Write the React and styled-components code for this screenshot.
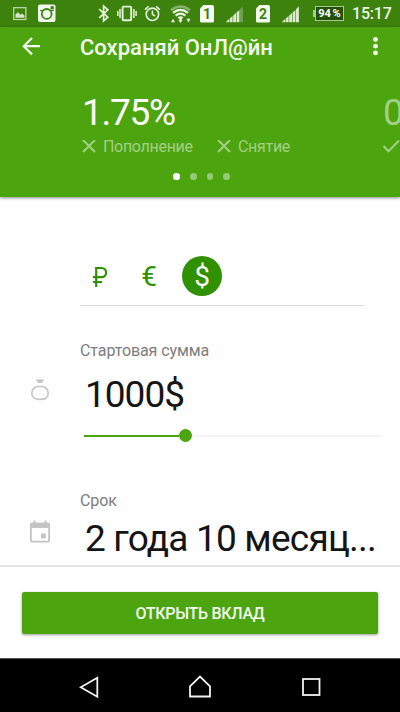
// App.jsx

import React from 'react';
import styled, { createGlobalStyle } from 'styled-components';

// --- Color Definitions ---
const GREEN = '#4ca40f';
const GREEN_STATUS = '#3c820d';
const GREEN_DARK = '#2f9000';
const GREEN_SOFT = '#a2d084';
const WHITE = '#ffffff';
const GREY_LABEL = '#7d7d7d';
const GREY_ICON = '#c4c4c4';
const INK = '#151515';

const GlobalStyle = createGlobalStyle`
  * {
    box-sizing: border-box;
  }

  body {
    margin: 0;
    overflow: hidden;
    font-family: Roboto, 'Liberation Sans', sans-serif;
  }
`;

// --- Styled Components ---

const Screen = styled.div`
  display: flex;
  flex-direction: column;
  width: 400px;
  height: 712px;
  overflow: hidden;
  background-color: #fefefe;
`;

const StatusBar = styled.div`
  display: flex;
  align-items: center;
  flex: none;
  height: 27px;
  background-color: ${GREEN_STATUS};
`;

const StatusIcons = styled.svg`
  flex: none;
  display: block;
  margin-left: ${({ $gap }) => $gap || 0}px;
`;

const SimBadge = styled.span`
  width: 14px;
  height: 18px;
  margin-left: ${({ $gap }) => $gap}px;
  border-radius: 2px;
  clip-path: polygon(4px 0, 100% 0, 100% 100%, 0 100%, 0 4px);
  background-color: #f6fbf2;
  color: ${GREEN_STATUS};
  font-size: 14px;
  font-weight: 700;
  line-height: 19px;
  text-align: center;
`;

const Battery = styled.span`
  position: relative;
  width: 29px;
  height: 15px;
  margin-left: 15px;
  border: 1px solid #a9c894;
  background-color: #24510a;
  color: ${WHITE};
  font-size: 11px;
  font-weight: 700;
  line-height: 14px;
  text-align: center;
  white-space: nowrap;
  word-spacing: -1px;

  &:before {
    content: '';
    position: absolute;
    left: -3px;
    top: 3px;
    width: 2px;
    height: 7px;
    background-color: #a9c894;
  }
`;

const Clock = styled.span`
  margin-left: 8px;
  color: #eef6e8;
  font-size: 16px;
  font-weight: 500;
  line-height: 28px;
  letter-spacing: -0.2px;
`;

const Header = styled.header`
  flex: none;
  height: 170px;
  background-color: ${GREEN};
  box-shadow: 0 1px 3px rgba(0, 0, 0, 0.45);
  overflow: hidden;
`;

const AppBar = styled.div`
  display: flex;
  align-items: center;
  height: 40px;
  padding: 0 20px 0 22px;
`;

const Title = styled.h1`
  flex: 1;
  margin: 0 0 0 38px;
  color: #f4faef;
  font-size: 22px;
  font-weight: 500;
  line-height: 41px;
  white-space: nowrap;
`;

const Offers = styled.div`
  display: flex;
  height: 89px;
  padding: 24px 0 0 82px;
`;

const Offer = styled.div`
  flex: none;
  width: 301px;
  color: ${({ $active }) => ($active ? WHITE : GREEN_SOFT)};
`;

const Rate = styled.div`
  height: 45px;
  font-size: 37px;
  line-height: 44px;
  letter-spacing: -1.3px;
`;

const Features = styled.div`
  display: flex;
  color: ${GREEN_SOFT};
`;

const Feature = styled.div`
  display: flex;
  align-items: center;
  width: 135px;
  min-height: 21px;
  gap: 7px;
  font-size: 16px;
  line-height: 21px;
  letter-spacing: -0.3px;
`;

const Pager = styled.div`
  display: flex;
  justify-content: center;
  gap: 10px;
  padding: 17px 0 0 3px;
`;

const PagerDot = styled.span`
  width: 6.7px;
  height: 6.7px;
  border-radius: 50%;
  background-color: ${({ $active }) => ($active ? WHITE : '#94ca73')};
`;

const Form = styled.main`
  flex: none;
  height: 368px;
  overflow: hidden;
`;

const Currencies = styled.div`
  display: flex;
  align-items: flex-start;
  width: 284px;
  height: 50px;
  margin: 59px 0 35px 80px;
  border-bottom: 1px solid #dedede;
`;

const Currency = styled.button`
  display: flex;
  align-items: center;
  justify-content: center;
  width: 40px;
  height: 40px;
  margin-right: ${({ $gap }) => $gap}px;
  padding: 0;
  border: 0;
  border-radius: 50%;
  background-color: ${({ $active }) => ($active ? GREEN_DARK : 'transparent')};
  color: ${({ $active }) => ($active ? WHITE : GREEN_DARK)};
  font-family: inherit;
  font-size: 28px;
  line-height: 41px;
`;

const Field = styled.section`
  display: grid;
  grid-template-columns: 80px 1fr;
  height: 150px;
`;

const FieldIcon = styled.div`
  display: flex;
  justify-content: center;
  padding-top: ${({ $top }) => $top}px;
`;

const FieldLabel = styled.div`
  color: ${GREY_LABEL};
  font-size: 16px;
  line-height: 20px;
  letter-spacing: -0.1px;
`;

const FieldValue = styled.div`
  width: 293px;
  margin: ${({ $top }) => $top}px 0 0 5px;
  color: ${INK};
  font-size: 37px;
  line-height: 44px;
  letter-spacing: ${({ $spacing }) => $spacing}px;
  white-space: nowrap;
`;

const Track = styled.div`
  display: flex;
  align-items: center;
  width: 298px;
  height: 13px;
  margin: 12px 0 0 4px;
`;

const TrackFill = styled.span`
  width: 95px;
  height: 2px;
  background-color: ${GREEN};
`;

const Thumb = styled.span`
  width: 13px;
  height: 13px;
  border-radius: 50%;
  background-color: ${GREEN};
`;

const TrackRest = styled.span`
  flex: 1;
  height: 2px;
  background-color: #f5f5f5;
`;

const Footer = styled.footer`
  flex: none;
  height: 93px;
  padding: 25px 22px 0;
  border-top: 2px solid #e3e3e3;
  background-color: ${WHITE};
`;

const SubmitButton = styled.button`
  width: 100%;
  height: 42px;
  padding: 0;
  border: 0;
  border-radius: 2px;
  background-color: ${GREEN};
  box-shadow: 0 1px 3px rgba(0, 0, 0, 0.4);
  color: #f4faef;
  font-family: inherit;
  font-size: 16px;
  font-weight: 500;
  line-height: 43px;
  letter-spacing: -0.3px;
`;

const NavBar = styled.nav`
  flex: 1;
  border-top: 1px solid #555555;
  background-color: #000000;
`;

// --- Icons ---

const LeftStatusIcons = () => (
  <StatusIcons width="192" height="27" viewBox="0 0 192 27">
    {/* gallery */}
    <rect x="13.7" y="7.7" width="12.2" height="11.8" fill="none" stroke="#c5dbb6" strokeWidth="1.2" />
    <path d="M15.5 17.8v-3.5l2.5-2 2.4 2.4 1.6-1.2 2.5 2v2.3z" fill="#d5e6ca" />
    {/* instagram */}
    <rect x="38" y="4.5" width="17.5" height="17.5" rx="2" fill="#f2f8ee" />
    <path d="M40 10.5h3M50.5 10.5h3.2" stroke={GREEN_STATUS} strokeWidth="1" />
    <circle cx="46.7" cy="13.9" r="4.9" fill="none" stroke={GREEN_STATUS} strokeWidth="1.8" />
    <rect x="50.6" y="6.2" width="3.2" height="3.2" fill={GREEN_STATUS} />
    {/* bluetooth */}
    <path d="M99.2 9.2l8.6 8-4.2 3.6V6.2l4.2 3.6-8.6 8" fill="none" stroke="#e6f1de" strokeWidth="1.7" />
    {/* vibration */}
    <rect x="122.6" y="6.6" width="8.6" height="13.6" rx="1" fill="none" stroke="#e6f1de" strokeWidth="1.9" />
    <path d="M120 9v9M117.8 11v5M133.9 9v9M136.1 11v5" stroke="#e6f1de" strokeWidth="1.5" />
    {/* alarm */}
    <circle cx="152.4" cy="14.3" r="6.2" fill="none" stroke="#e6f1de" strokeWidth="1.6" />
    <path d="M152.4 10.4v4l2.8 1.8M145 9.6l3.6-3.2M159.8 9.6l-3.6-3.2" fill="none" stroke="#e6f1de" strokeWidth="1.5" />
    {/* wifi */}
    <path d="M171 10.3q9.5-7.6 19 0" fill="none" stroke="#86b168" strokeWidth="2.4" />
    <path d="M173 12.8q7.5-5.8 15 0M175.6 15.6q4.9-3.8 9.8 0" fill="none" stroke="#eef6e8" strokeWidth="2.2" />
    <path d="M177.6 17.3q2.9-2 5.8 0l-2.9 3.4z" fill="#eef6e8" />
    <path d="M171 22.3l2-3.6 2 3.6zM178.5 20h4l-2 3zM186.5 18.8h4l-2 3.6z" fill="#eef6e8" />
  </StatusIcons>
);

const Signal = ({ gap, weak }) => (
  <StatusIcons $gap={gap} width="18" height="27" viewBox="0 0 18 27">
    <path d="M.5 22.3v-1l2.7-2.4v3.4zM3.8 22.3v-3.900l2.800-2.400v6.300zM7.200 22.300v-6.900l2.800-2.400v9.300z" fill="#dcebd0" />
    <path d="M10.600 22.300v-9.800l2.800-2.400v12.200z" fill="#dcebd0" />
    <path d="M14 22.300V9.200L16.900 6.200v16.100z" fill={weak ? '#71a152' : '#dcebd0'} />
  </StatusIcons>
);

const BackIcon = () => (
  <svg width="20" height="20" viewBox="0 0 20 20" fill="none" stroke="#f4faef" strokeWidth="2.2">
    <path d="M10 1L1.800 9.200l8.200 8.200M2 9.200h16" />
  </svg>
);

const MoreIcon = () => (
  <svg width="8" height="20" viewBox="0 0 8 20" fill="#f4faef">
    <circle cx="3.5" cy="2.4" r="2.4" />
    <circle cx="3.5" cy="9.2" r="2.4" />
    <circle cx="3.5" cy="15.9" r="2.4" />
  </svg>
);

const CrossIcon = () => (
  <svg width="14" height="14" viewBox="0 0 14 14" stroke="currentColor" strokeWidth="2">
    <path d="M1 0l12 12M13 0L1 12" />
  </svg>
);

const CheckIcon = () => (
  <svg width="17" height="14" viewBox="0 0 17 14" fill="none" stroke="currentColor" strokeWidth="2">
    <path d="M.5 6l5 5.200L16 .5" />
  </svg>
);

const RubleIcon = () => (
  <svg width="16" height="22" viewBox="0 0 16 22" fill="none" stroke="currentColor" strokeWidth="2.2">
    <path d="M4.200 22V3h5.300a4.500 4.500 0 0 1 0 9.200H1M1 17h9" />
  </svg>
);

const BagIcon = () => (
  <svg width="20" height="24" viewBox="0 0 20 24" fill="none" stroke={GREY_ICON} strokeWidth="1.6">
    <path d="M6.500 1.500l1.800 3h3.400l1.800-3-2 .8-1.500-.8-1.500.8z" fill={GREY_ICON} strokeWidth="1" />
    <path d="M7.300 8.500h5.400c2.900 1 5.500 3.600 5.500 6.900 0 3.800-3.200 6-8.200 6s-8.200-2.200-8.200-6c0-3.300 2.600-5.900 5.500-6.900z" />
  </svg>
);

const CalendarIcon = () => (
  <svg width="20" height="23" viewBox="0 0 20 23" fill={GREY_ICON}>
    <path d="M3.500 .5h2v2h9v-2h2v2h1.500a2 2 0 0 1 2 2v16a2 2 0 0 1-2 2H2a2 2 0 0 1-2-2v-16a2 2 0 0 1 2-2h1.500zM1.800 8v12.700h16.400V8z" fillRule="evenodd" />
    <rect x="11" y="13.5" width="4.8" height="4.8" />
  </svg>
);

const NavIcons = () => (
  <svg width="400" height="53" viewBox="0 0 400 53" fill="none" stroke="#f2f2f2" strokeWidth="1.8">
    <path d="M80.800 28.300L97.300 18.800v19z" />
    <path d="M190 37.500V27.300l10-9.800 10 9.800v10.200z" />
    <rect x="303" y="20" width="16.5" height="16" />
  </svg>
);

// --- Main Component ---

const App = () => (
  <Screen>
    <GlobalStyle />
    <StatusBar>
      <LeftStatusIcons />
      <SimBadge $gap={8}>1</SimBadge>
      <Signal gap={12} weak />
      <SimBadge $gap={12}>2</SimBadge>
      <Signal gap={12} />
      <Battery>94 %</Battery>
      <Clock>15:17</Clock>
    </StatusBar>

    <Header>
      <AppBar>
        <BackIcon />
        <Title>Сохраняй ОнЛ@йн</Title>
        <MoreIcon />
      </AppBar>
      <Offers>
        <Offer $active>
          <Rate>1.75%</Rate>
          <Features>
            <Feature><CrossIcon />Пополнение</Feature>
            <Feature><CrossIcon />Снятие</Feature>
          </Features>
        </Offer>
        <Offer>
          <Rate>0</Rate>
          <Features>
            <Feature><CheckIcon /></Feature>
          </Features>
        </Offer>
      </Offers>
      <Pager>
        {[0, 1, 2, 3].map((page) => (
          <PagerDot key={page} $active={page === 0} />
        ))}
      </Pager>
    </Header>

    <Form>
      <Currencies>
        <Currency $gap={9}><RubleIcon /></Currency>
        <Currency $gap={13}>€</Currency>
        <Currency $gap={0} $active>$</Currency>
      </Currencies>
      <Field>
        <FieldIcon $top={37}><BagIcon /></FieldIcon>
        <div>
          <FieldLabel>Стартовая сумма</FieldLabel>
          <FieldValue $top={12} $spacing={-1}>1000$</FieldValue>
          <Track>
            <TrackFill />
            <Thumb />
            <TrackRest />
          </Track>
        </div>
      </Field>
      <Field>
        <FieldIcon $top={29}><CalendarIcon /></FieldIcon>
        <div>
          <FieldLabel>Срок</FieldLabel>
          <FieldValue $top={6} $spacing={-0.8}>2 года 10 месяц...</FieldValue>
        </div>
      </Field>
    </Form>

    <Footer>
      <SubmitButton>ОТКРЫТЬ ВКЛАД</SubmitButton>
    </Footer>
    <NavBar>
      <NavIcons />
    </NavBar>
  </Screen>
);

export default App;
